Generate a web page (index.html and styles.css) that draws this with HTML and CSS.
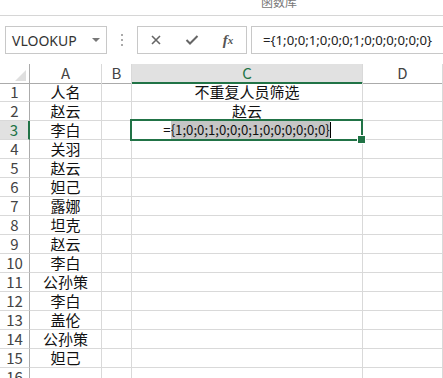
FILE: index.html
```html
<!DOCTYPE html>
<html lang="zh-CN">
<head>
    <meta charset="UTF-8">
    <title>不重复人员筛选</title>
    <link rel="stylesheet" href="styles.css">
</head>
<body>
    <div class="ribbon">
        <span class="ribbon-label">函数库</span>
    </div>

    <div class="formula-bar">
        <div class="name-box">
            <span>VLOOKUP</span>
            <span class="drop"></span>
        </div>
        <div class="grip"><i></i><i></i><i></i></div>
        <div class="fx-buttons">
            <span class="fx-btn">
                <svg width="12" height="12" viewBox="0 0 12 12"><path d="M2 2 L10 10 M10 2 L2 10" stroke="#666" stroke-width="1.6" fill="none"/></svg>
            </span>
            <span class="fx-btn">
                <svg width="14" height="12" viewBox="0 0 14 12"><path d="M1.5 6 L5 9.5 L12.5 2" stroke="#666" stroke-width="2" fill="none"/></svg>
            </span>
            <span class="fx-btn fx-label">f<sub>x</sub></span>
        </div>
        <div class="formula-input">={1;0;0;1;0;0;0;1;0;0;0;0;0;0}</div>
    </div>

    <div class="sheet">
        <div class="row head">
            <div class="cell corner"><span class="tri"></span></div>
            <div class="cell col">A</div>
            <div class="cell col">B</div>
            <div class="cell col selected">C</div>
            <div class="cell col">D</div>
        </div>
        <div class="row"><div class="cell num">1</div><div class="cell">人名</div><div class="cell"></div><div class="cell">不重复人员筛选</div><div class="cell"></div></div>
        <div class="row"><div class="cell num">2</div><div class="cell">赵云</div><div class="cell"></div><div class="cell">赵云</div><div class="cell"></div></div>
        <div class="row"><div class="cell num selected">3</div><div class="cell">李白</div><div class="cell"></div><div class="cell active">=<span class="sel">{1;0;0;1;0;0;0;1;0;0;0;0;0;0}</span><span class="caret"></span></div><div class="cell"></div></div>
        <div class="row"><div class="cell num">4</div><div class="cell">关羽</div><div class="cell"></div><div class="cell"></div><div class="cell"></div></div>
        <div class="row"><div class="cell num">5</div><div class="cell">赵云</div><div class="cell"></div><div class="cell"></div><div class="cell"></div></div>
        <div class="row"><div class="cell num">6</div><div class="cell">妲己</div><div class="cell"></div><div class="cell"></div><div class="cell"></div></div>
        <div class="row"><div class="cell num">7</div><div class="cell">露娜</div><div class="cell"></div><div class="cell"></div><div class="cell"></div></div>
        <div class="row"><div class="cell num">8</div><div class="cell">坦克</div><div class="cell"></div><div class="cell"></div><div class="cell"></div></div>
        <div class="row"><div class="cell num">9</div><div class="cell">赵云</div><div class="cell"></div><div class="cell"></div><div class="cell"></div></div>
        <div class="row"><div class="cell num">10</div><div class="cell">李白</div><div class="cell"></div><div class="cell"></div><div class="cell"></div></div>
        <div class="row"><div class="cell num">11</div><div class="cell">公孙策</div><div class="cell"></div><div class="cell"></div><div class="cell"></div></div>
        <div class="row"><div class="cell num">12</div><div class="cell">李白</div><div class="cell"></div><div class="cell"></div><div class="cell"></div></div>
        <div class="row"><div class="cell num">13</div><div class="cell">盖伦</div><div class="cell"></div><div class="cell"></div><div class="cell"></div></div>
        <div class="row"><div class="cell num">14</div><div class="cell">公孙策</div><div class="cell"></div><div class="cell"></div><div class="cell"></div></div>
        <div class="row"><div class="cell num">15</div><div class="cell">妲己</div><div class="cell"></div><div class="cell"></div><div class="cell"></div></div>
        <div class="row"><div class="cell num">16</div><div class="cell"></div><div class="cell"></div><div class="cell"></div><div class="cell"></div></div>
    </div>
</body>
</html>
```

FILE: styles.css
```css
* {
    margin: 0;
    padding: 0;
    box-sizing: border-box;
}

body {
    background: #fff;
    font-family: "Noto Sans CJK SC", "Noto Sans", sans-serif;
    color: #222;
    width: 443px;
    height: 378px;
    overflow: hidden;
}

/* ribbon group caption, cut off at the top */
.ribbon {
    height: 16px;
    border-bottom: 1px solid #d6d6d6;
    overflow: hidden;
}

.ribbon-label {
    display: block;
    margin-top: -4px;
    padding-left: 261px;
    font-size: 12px;
    line-height: 12px;
    color: #777;
}

/* name box + formula input */
.formula-bar {
    display: flex;
    padding: 10px 0;
    height: 48px;
}

.name-box {
    margin-left: 5px;
    width: 102px;
    height: 28px;
    border: 1px solid #c8c8c8;
    display: flex;
    align-items: center;
    justify-content: space-between;
    padding: 0 6px 0 6px;
    font-family: "Noto Sans", sans-serif;
    font-size: 14px;
    color: #333;
}

.drop {
    width: 0;
    height: 0;
    border-left: 4px solid transparent;
    border-right: 4px solid transparent;
    border-top: 4px solid #777;
}

.grip {
    width: 30px;
    display: flex;
    flex-direction: column;
    align-items: center;
    justify-content: center;
    gap: 3px;
}

.grip i {
    width: 2px;
    height: 2px;
    background: #aaa;
}

.fx-buttons {
    width: 110px;
    height: 28px;
    border: 1px solid #c8c8c8;
    display: flex;
    align-items: center;
}

.fx-btn {
    width: 36px;
    display: flex;
    justify-content: center;
    align-items: center;
}

.fx-label {
    font-family: "Liberation Serif", serif;
    font-style: italic;
    font-weight: bold;
    font-size: 15px;
    color: #555;
}

.fx-label sub {
    font-size: 11px;
    vertical-align: -1px;
}

.formula-input {
    flex: 1;
    margin-left: 4px;
    margin-right: -4px;
    height: 28px;
    border: 1px solid #c8c8c8;
    padding-left: 11px;
    font-family: "Noto Sans", sans-serif;
    font-size: 13.2px;
    line-height: 26px;
    color: #222;
}

/* worksheet grid */
.row {
    display: grid;
    grid-template-columns: 30px 72px 30px 231px 1fr;
    height: 19px;
}

.cell {
    border-right: 1px solid #d9d9d9;
    border-bottom: 1px solid #d9d9d9;
    font-size: 15px;
    line-height: 18px;
    text-align: center;
    white-space: nowrap;
    color: #111;
}

.head .cell {
    border-bottom-color: #ababab;
    color: #444;
    font-size: 15px;
}

.head .corner {
    position: relative;
    border-right-color: #ababab;
}

.tri {
    position: absolute;
    right: 3px;
    bottom: 2px;
    width: 0;
    height: 0;
    border-left: 11px solid transparent;
    border-bottom: 11px solid #dfdfdf;
}

.cell.num {
    border-right-color: #ababab;
    color: #444;
}

.head .selected {
    background: #e1e1e1;
    color: #217346;
    border-bottom: 2px solid #217346;
}

.num.selected {
    background: #e1e1e1;
    color: #217346;
    border-right: 2px solid #217346;
}

.active {
    position: relative;
    z-index: 1;
    font-size: 13.2px;
}

.active::after {
    content: "";
    position: absolute;
    left: -2px;
    top: -2px;
    right: -1px;
    bottom: -2px;
    border: 2px solid #217346;
}

.active::before {
    content: "";
    position: absolute;
    right: -4px;
    bottom: -5px;
    width: 7px;
    height: 7px;
    background: #217346;
    border: 1px solid #fff;
    z-index: 2;
}

.sel {
    background: #c6c6c6;
    padding: 1px 0;
}

.caret {
    display: inline-block;
    width: 1px;
    height: 16px;
    background: #000;
    vertical-align: -3px;
}
```
